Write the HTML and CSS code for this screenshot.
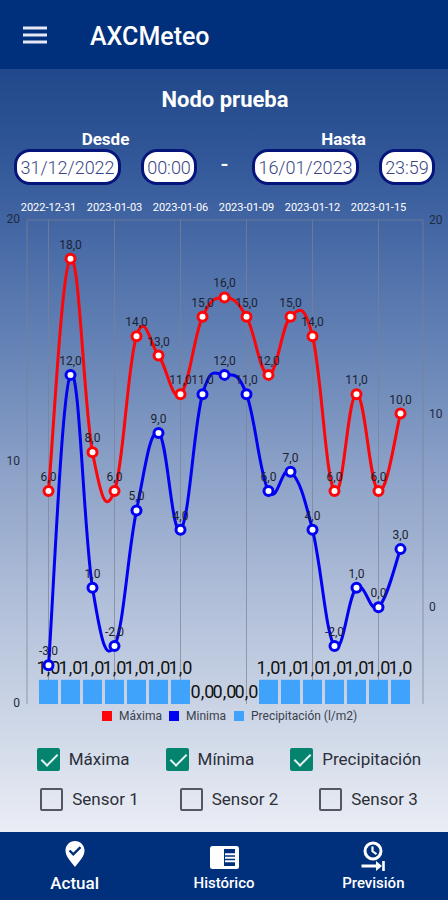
FILE: index.html
```html
<!DOCTYPE html>
<html lang="es">
<head>
    <meta charset="UTF-8">
    <meta name="viewport" content="width=device-width, initial-scale=1.0">
    <title>AXCMeteo - Histórico</title>
    <link rel="stylesheet" href="styles.css">
</head>
<body>
    <header class="header">
        <button class="menu-btn" type="button" aria-label="Menú">
            <svg width="24" height="18" viewBox="0 0 24 18">
                <path d="M0 2h24M0 9h24M0 16h24" stroke="currentColor" stroke-width="3" fill="none"/>
            </svg>
        </button>
        <h1 class="app-title">AXCMeteo</h1>
    </header>

    <main class="content">
        <h2 class="node-title">Nodo prueba</h2>

        <!-- Rango de fechas -->
        <form class="range">
            <div class="range-group">
                <label for="date-from">Desde</label>
                <div class="range-inputs">
                    <input class="pill pill-date" id="date-from" type="text" value="31/12/2022">
                    <input class="pill pill-time" type="text" value="00:00" aria-label="Hora desde">
                </div>
            </div>
            <span class="range-dash">-</span>
            <div class="range-group">
                <label for="date-to">Hasta</label>
                <div class="range-inputs">
                    <input class="pill pill-date" id="date-to" type="text" value="16/01/2023">
                    <input class="pill pill-time" type="text" value="23:59" aria-label="Hora hasta">
                </div>
            </div>
        </form>

        <!-- Gráfica -->
        <svg class="chart" id="chart" viewBox="0 0 448 536"></svg>

        <!-- Series visibles -->
        <div class="checks checks-main">
            <label class="check"><input type="checkbox" checked>Máxima</label>
            <label class="check"><input type="checkbox" checked>Mínima</label>
            <label class="check"><input type="checkbox" checked>Precipitación</label>
        </div>
        <div class="checks checks-sensors">
            <label class="check"><input type="checkbox">Sensor 1</label>
            <label class="check"><input type="checkbox">Sensor 2</label>
            <label class="check"><input type="checkbox">Sensor 3</label>
        </div>
    </main>

    <nav class="bottom-nav">
        <a class="nav-item active" href="#actual">
            <svg width="32" height="32" viewBox="0 0 32 32">
                <path d="M16 3C10.8 3 6.5 7.2 6.5 12.4C6.5 18.500 12 23.500 16 29C20 23.500 25.5 18.500 25.5 12.4C25.5 7.2 21.2 3 16 3Z" fill="currentColor"/>
                <path d="M10.5 12.5L14.3 16.3L21.5 9.2" fill="none" stroke="#002f7b" stroke-width="2.4"/>
            </svg>
            <span>Actual</span>
        </a>
        <a class="nav-item" href="#historico">
            <svg width="32" height="32" viewBox="0 0 32 32">
                <rect x="2" y="8" width="29" height="23" rx="2.5" fill="currentColor"/>
                <rect x="16" y="11" width="11" height="17" fill="#002f7b"/>
                <path d="M17 16.2h11M17 19.7h11M17 23.2h11" stroke="currentColor" stroke-width="2"/>
            </svg>
            <span>Histórico</span>
        </a>
        <a class="nav-item" href="#prevision">
            <svg width="32" height="32" viewBox="0 0 32 32">
                <circle cx="16" cy="13" r="8" fill="none" stroke="currentColor" stroke-width="3"/>
                <path d="M15.5 8.5v4.8l4 2.8" fill="none" stroke="currentColor" stroke-width="2.2"/>
                <path d="M4.500 28h16" stroke="currentColor" stroke-width="3"/>
                <path d="M19 23L25 28L19 33Z" fill="currentColor"/>
                <path d="M26.5 23V33" stroke="currentColor" stroke-width="2.6"/>
            </svg>
            <span>Previsión</span>
        </a>
    </nav>

    <script>
        const maxima = [6, 18, 8, 6, 14, 13, 11, 15, 16, 15, 12, 15, 14, 6, 11, 6, 10];
        const minima = [-3, 12, 1, -2, 5, 9, 4, 11, 12, 11, 6, 7, 4, -2, 1, 0, 3];
        const lluvia = [1, 1, 1, 1, 1, 1, 1, 0, 0, 0, 1, 1, 1, 1, 1, 1, 1];
        const fechas = ['2022-12-31', '2023-01-03', '2023-01-06', '2023-01-09', '2023-01-12', '2023-01-15'];

        const plot = { left: 27, right: 423, top: 30, bottom: 514, first: 48.5, step: 22 };
        const height = plot.bottom - plot.top;

        const px = i => plot.first + i * plot.step;
        // eje derecho: temperatura (-5..20), eje izquierdo: lluvia (0..20)
        const tempY = v => plot.bottom - (v + 5) * height / 25;
        const rainY = v => plot.bottom - v * height / 20;
        const format = v => v.toFixed(1).replace('.', ',');

        const text = (x, y, cls, str) => `<text x="${x}" y="${y}" class="${cls}">${str}</text>`;
        const vline = x => `<line x1="${x}" y1="${plot.top}" x2="${x}" y2="${plot.bottom}" class="grid"/>`;

        // curva bezier con intensidad 0.2
        const curve = values => {
            const p = values.map((v, i) => [px(i), tempY(v)]);
            const at = i => p[Math.max(0, Math.min(p.length - 1, i))];
            let d = `M${p[0]}`;
            for (let i = 1; i < p.length; i++) {
                const c1 = [0, 1].map(k => at(i - 1)[k] + (at(i)[k] - at(i - 2)[k]) * 0.2);
                const c2 = [0, 1].map(k => at(i)[k] - (at(i + 1)[k] - at(i - 1)[k]) * 0.2);
                d += `C${c1} ${c2} ${p[i]}`;
            }
            return d;
        };

        const series = (values, cls) =>
            `<path d="${curve(values)}" class="line ${cls}"/>` +
            values.map((v, i) => `<circle cx="${px(i)}" cy="${tempY(v)}" r="4.5" class="dot ${cls}"/>`).join('');

        const labels = values =>
            values.map((v, i) => text(px(i), tempY(v) - 10, 'value', format(v))).join('');

        let svg = `<line x1="${plot.left}" y1="${plot.top}" x2="${plot.right}" y2="${plot.top}" class="grid"/>`;
        svg += vline(plot.left) + vline(plot.right);
        fechas.forEach((f, i) => {
            svg += vline(px(i * 3)) + text(px(i * 3), 21, 'date', f);
        });
        [0, 10, 20].forEach(v => {
            svg += text(20, rainY(v) + 3, 'axis axis-left', v);
            svg += text(429, tempY(v) + 4, 'axis', v);
        });
        lluvia.forEach((v, i) => {
            svg += `<rect x="${px(i) - 9.5}" y="${rainY(v)}" width="19" height="${plot.bottom - rainY(v)}" class="bar"/>`;
            svg += text(px(i), rainY(v) - 6, 'bar-value', format(v));
        });
        svg += series(maxima, 'max') + series(minima, 'min');
        svg += labels(maxima) + labels(minima);

        // leyenda
        [['max', 102, 'Máxima'], ['min', 169, 'Minima'], ['bar', 234, 'Precipitación (l/m2)']].forEach(([cls, x, name]) => {
            svg += `<rect x="${x}" y="521" width="10" height="10" class="key ${cls}"/>`;
            svg += text(x + 17, 530, 'legend', name);
        });

        document.getElementById('chart').innerHTML = svg;
    </script>
</body>
</html>
```

FILE: styles.css
```css
:root {
    --navy: #002f7b;
    --pill-border: #06157a;
    --green: #04846f;
    --text: #2c2f38;
}

* {
    box-sizing: border-box;
}

body {
    font-family: Roboto, sans-serif;
    color: var(--text);
    margin: 0;
    min-height: 100vh;
    display: flex;
    flex-direction: column;
}

/* Cabecera */
.header {
    display: flex;
    align-items: center;
    gap: 43px;
    height: 69px;
    padding: 4px 23px 0;
    background: var(--navy);
    color: #fff;
}

.menu-btn {
    display: flex;
    padding: 0 0 4px;
    border: none;
    background: none;
    color: #e4e9f5;
    cursor: pointer;
}

.app-title {
    margin: 0;
    font-size: 25px;
    font-weight: 500;
    line-height: 30px;
}

/* Contenido */
.content {
    flex: 1;
    background: linear-gradient(#21488a 0%, #2f5597 10%, #4467a4 21%, #6482b5 36%, #8fa4c9 54%, #b1bfd9 70%, #d0d9e8 87%, #ebedf5 100%);
}

.node-title {
    margin: 17px 0 15px;
    padding-left: 2px;
    color: #fff;
    font-size: 22px;
    font-weight: 700;
    line-height: 28px;
    text-align: center;
}

.range {
    display: flex;
    justify-content: space-between;
    padding: 0 13px 0 14px;
    color: #fff;
}

.range-group {
    display: flex;
    flex-direction: column;
    align-items: center;
    font-size: 17px;
    font-weight: 700;
    line-height: 20px;
}

.range-inputs {
    display: flex;
    gap: 20px;
}

.range-dash {
    align-self: flex-end;
    font-size: 22px;
    font-weight: 500;
    line-height: 40px;
}

.pill {
    height: 36px;
    padding: 0;
    border: 3px solid var(--pill-border);
    border-radius: 16px;
    background: #fff;
    color: #3a4684;
    font-family: inherit;
    font-size: 18px;
    font-weight: 300;
    text-align: center;
}

.pill-date {
    width: 107px;
}

.pill-time {
    width: 56px;
}

/* Gráfica */
.chart {
    display: block;
    width: 100%;
    margin-top: 5px;
}

.grid {
    stroke: #7a8296;
    stroke-opacity: 0.7;
}

.line {
    fill: none;
    stroke-width: 3;
}

.line.max, .dot.max {
    stroke: #fd0509;
}

.line.min, .dot.min {
    stroke: #0202f2;
}

.dot {
    fill: #fff;
    stroke-width: 3;
}

.bar {
    fill: #3fa2fb;
}

.key.max {
    fill: #fd0509;
}

.key.min {
    fill: #0202f2;
}

.date {
    fill: #fff;
    font-size: 11px;
    text-anchor: middle;
}

.axis {
    fill: #1f2a40;
    font-size: 12px;
}

.axis-left {
    text-anchor: end;
}

.value {
    fill: #1b2233;
    font-size: 12px;
    text-anchor: middle;
}

.bar-value {
    fill: #111;
    font-size: 18px;
    text-anchor: middle;
}

.legend {
    fill: #3a3f4c;
    font-size: 12px;
}

/* Casillas */
.checks {
    display: flex;
    justify-content: center;
    padding-left: 10px;
}

.checks-main {
    gap: 36px;
    margin-top: 22px;
}

.checks-sensors {
    gap: 41px;
    margin: 17px 0 20px;
}

.check {
    display: flex;
    align-items: center;
    gap: 9px;
    font-size: 17px;
    line-height: 23px;
}

.check input {
    appearance: none;
    position: relative;
    width: 23px;
    height: 23px;
    margin: 0;
    border: 2px solid #54575f;
    border-radius: 2px;
}

.check input:checked {
    border-color: var(--green);
    background: var(--green);
}

.check input:checked::after {
    content: "";
    position: absolute;
    left: 6px;
    top: 0;
    width: 7px;
    height: 14px;
    border: solid #e6f2f2;
    border-width: 0 2px 2px 0;
    transform: rotate(45deg);
}

/* Navegación inferior */
.bottom-nav {
    display: flex;
    height: 68px;
    background: var(--navy);
}

.nav-item {
    flex: 1;
    display: flex;
    flex-direction: column;
    align-items: center;
    padding-top: 6px;
    color: #fff;
    font-size: 15px;
    font-weight: 500;
    line-height: 27px;
    text-decoration: none;
}

.nav-item svg {
    overflow: visible;
}

.nav-item.active {
    font-size: 17px;
}
```
